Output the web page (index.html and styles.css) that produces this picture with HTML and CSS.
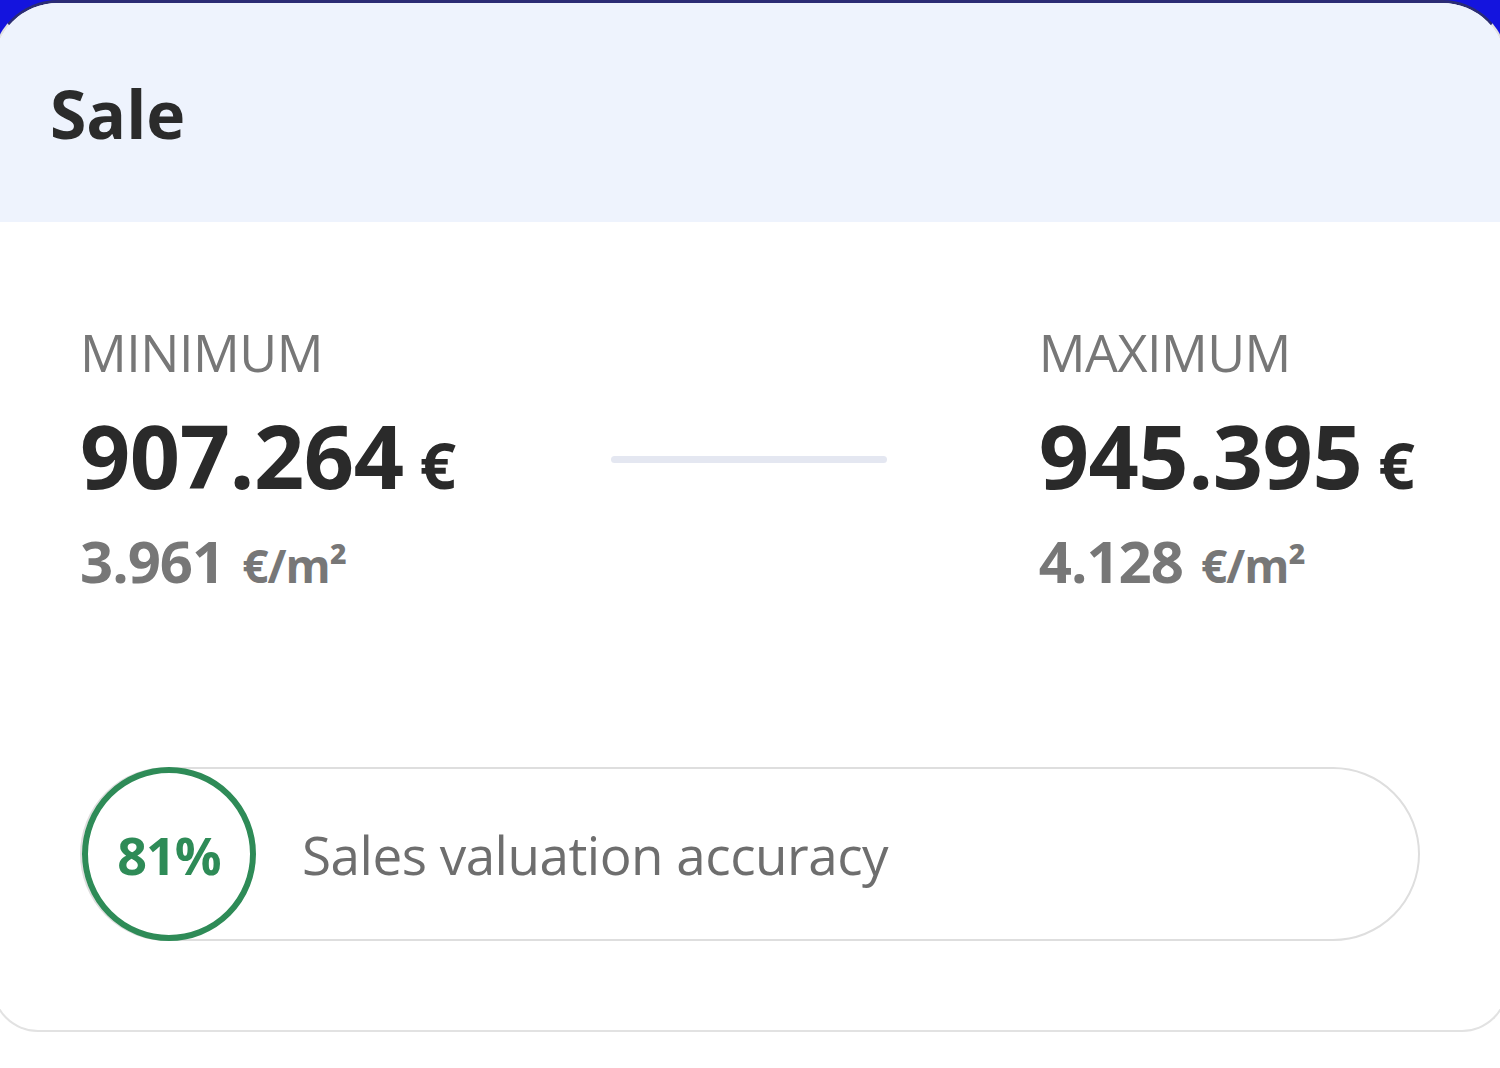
FILE: index.html
```html
<!DOCTYPE html>
<html lang="en">
  <head>
    <meta charset="UTF-8" />
    <meta name="viewport" content="width=device-width, initial-scale=1.0" />
    <title>Sale valuation</title>
    <link rel="stylesheet" href="styles.css">
  </head>
  <body>
    <div class="frame">
      <div class="card">
        <div class="card-head">
          <h2>Sale</h2>
        </div>
        <div class="card-body">
          <div class="range">
            <div class="bound">
              <span class="bound-label">MINIMUM</span>
              <span class="price">907.264<small>€</small></span>
              <span class="per-meter">3.961<small>€/m²</small></span>
            </div>
            <div class="range-line"></div>
            <div class="bound">
              <span class="bound-label">MAXIMUM</span>
              <span class="price">945.395<small>€</small></span>
              <span class="per-meter">4.128<small>€/m²</small></span>
            </div>
          </div>
          <div class="accuracy">
            <div class="accuracy-ring">81%</div>
            <span class="accuracy-text">Sales valuation accuracy</span>
          </div>
        </div>
      </div>
    </div>
  </body>
</html>
```

FILE: styles.css
```css
body {
  margin: 0;
  font-family: "Open Sans", Arial, sans-serif;
  background-color: #fff;
  overflow: hidden;
}
.frame {
  background: linear-gradient(#1414de 0, #1414de 70px, #fff 70px);
}
.card {
  margin: 0 -8px;
  border: 2px solid #e2e2e2;
  border-top: 3px solid #2b2c74;
  border-radius: 66px 66px 46px 46px;
  background-color: #fff;
  overflow: hidden;
}
.card-head {
  background-color: #eef3fd;
  height: 219px;
  padding-left: 56px;
  display: flex;
  align-items: center;
}
.card-head h2 {
  margin: 0;
  font-size: 66px;
  font-weight: 700;
  color: #2b2b2b;
}
.card-body {
  padding: 100px 84px 89px 86px;
}
.range {
  display: flex;
  align-items: flex-start;
}
.bound {
  display: flex;
  flex-direction: column;
  width: 384px;
}
.bound-label {
  font-size: 52px;
  line-height: 60px;
  color: #777;
  letter-spacing: -0.5px;
}
.price {
  font-size: 88px;
  font-weight: 700;
  line-height: 112px;
  margin-top: 17px;
  color: #2a2a2a;
  letter-spacing: -0.5px;
}
.price small {
  font-size: 64px;
  margin-left: 16px;
}
.per-meter {
  font-size: 58px;
  font-weight: 700;
  line-height: 80px;
  color: #777;
  letter-spacing: -1px;
}
.per-meter small {
  font-size: 46px;
  margin-left: 18px;
}
.range-line {
  width: 276px;
  height: 7px;
  border-radius: 4px;
  background-color: #e4e7f1;
  margin: 134px 152px 0 148px;
}
.accuracy {
  margin-top: 162px;
  height: 170px;
  border: 2px solid #dedede;
  border-radius: 90px;
  display: flex;
  align-items: center;
  gap: 46px;
  width: 1336px;
}
.accuracy-ring {
  width: 162px;
  height: 162px;
  flex-shrink: 0;
  border: 6px solid #2e8b57;
  border-radius: 50%;
  display: flex;
  align-items: center;
  justify-content: center;
  font-size: 52px;
  font-weight: 700;
  color: #2e8b57;
  letter-spacing: -1px;
}
.accuracy-text {
  font-size: 53px;
  color: #6e6e6e;
  letter-spacing: -0.5px;
}
```
